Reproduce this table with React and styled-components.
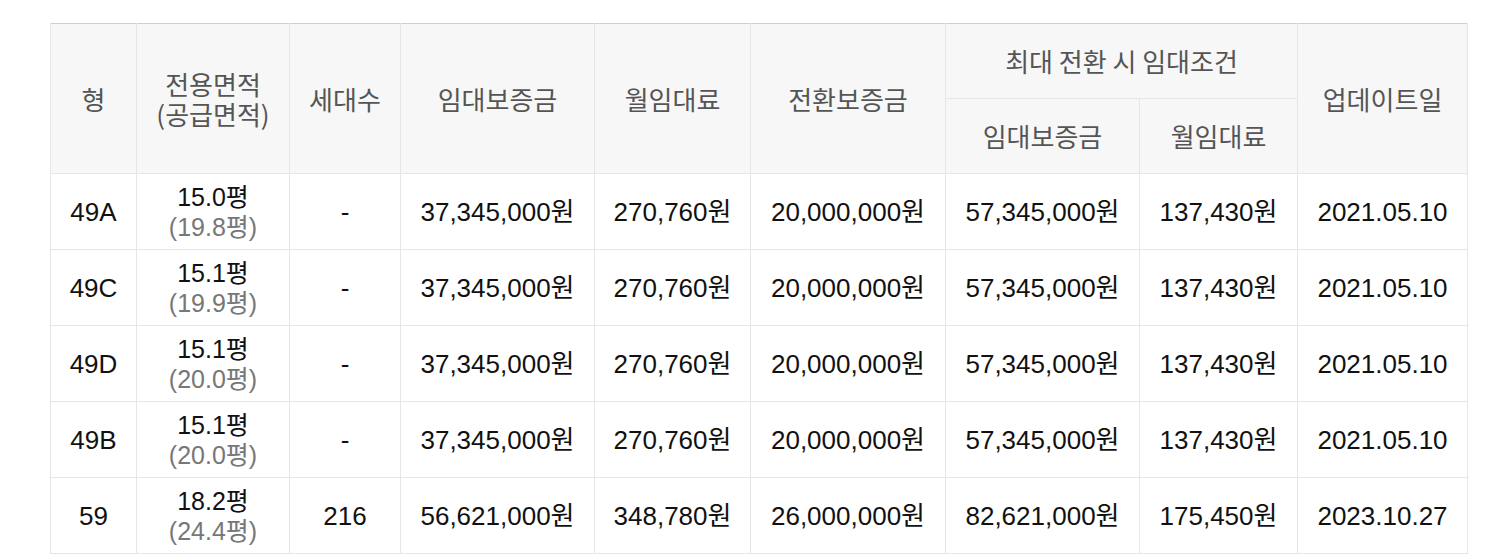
import React from "react";
import styled, { createGlobalStyle } from "styled-components";

const Global = createGlobalStyle`
  html, body { margin: 0; padding: 0; background: #fff; }
  body { font-family: "Liberation Sans", "Noto Sans CJK KR", Arial, sans-serif; }
`;

const Page = styled.div`
  padding: 23px 42px 0 50px;
`;

const Table = styled.table`
  border-collapse: collapse;
  table-layout: fixed;
  width: 1417px;
  border-top: 1px solid #cfcfcf;
`;

const Th = styled.th`
  background: #f7f7f7;
  color: #555;
  font-weight: 400;
  font-size: 26px;
  line-height: 30px;
  font-family: "Noto Sans CJK KR", "Liberation Sans", sans-serif;
  border: 1px solid #e6e6e6;
  border-top: none;
  height: 74px;
  padding: 0;
  text-align: center;
  vertical-align: middle;
`;

const Td = styled.td`
  color: #111;
  font-size: 26px;
  line-height: 30px;
  border: 1px solid #e6e6e6;
  height: 75px;
  padding: 0;
  text-align: center;
  vertical-align: middle;
`;

const Area = styled.div`
  font-size: 25px;
  line-height: 30px;
  color: ${(p) => (p.$sub ? "#777" : "#111")};
`;

const widths = [86, 153, 111, 194, 156, 195, 194, 158, 170];

const rows = [
  ["49A", "15.0평", "19.8평", "-", "37,345,000원", "270,760원", "20,000,000원", "57,345,000원", "137,430원", "2021.05.10"],
  ["49C", "15.1평", "19.9평", "-", "37,345,000원", "270,760원", "20,000,000원", "57,345,000원", "137,430원", "2021.05.10"],
  ["49D", "15.1평", "20.0평", "-", "37,345,000원", "270,760원", "20,000,000원", "57,345,000원", "137,430원", "2021.05.10"],
  ["49B", "15.1평", "20.0평", "-", "37,345,000원", "270,760원", "20,000,000원", "57,345,000원", "137,430원", "2021.05.10"],
  ["59", "18.2평", "24.4평", "216", "56,621,000원", "348,780원", "26,000,000원", "82,621,000원", "175,450원", "2023.10.27"],
];

export default function App() {
  return (
    <>
      <Global />
      <Page>
        <Table>
          <colgroup>
            {widths.map((w, i) => (
              <col key={i} style={{ width: w }} />
            ))}
          </colgroup>
          <thead>
            <tr>
              <Th rowSpan={2}>형</Th>
              <Th rowSpan={2}>
                전용면적
                <br />
                (공급면적)
              </Th>
              <Th rowSpan={2}>세대수</Th>
              <Th rowSpan={2}>임대보증금</Th>
              <Th rowSpan={2}>월임대료</Th>
              <Th rowSpan={2}>전환보증금</Th>
              <Th colSpan={2}>최대 전환 시 임대조건</Th>
              <Th rowSpan={2}>업데이트일</Th>
            </tr>
            <tr>
              <Th>임대보증금</Th>
              <Th>월임대료</Th>
            </tr>
          </thead>
          <tbody>
            {rows.map((r, i) => (
              <tr key={i}>
                <Td>{r[0]}</Td>
                <Td>
                  <Area>{r[1]}</Area>
                  <Area $sub>({r[2]})</Area>
                </Td>
                {r.slice(3).map((c, j) => (
                  <Td key={j}>{c}</Td>
                ))}
              </tr>
            ))}
          </tbody>
        </Table>
      </Page>
    </>
  );
}
